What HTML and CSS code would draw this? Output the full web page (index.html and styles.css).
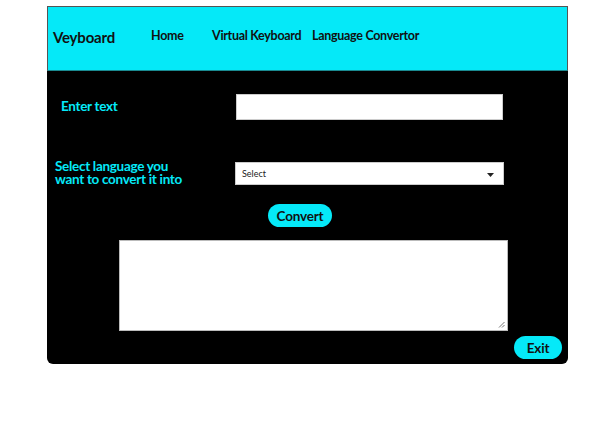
FILE: index.html
```html
<!DOCTYPE html>
<html>
<head>
<meta charset="utf-8">
<link rel="stylesheet" href="styles.css">
</head>
<body>
<div class="app">
  <header class="nav">
    <span class="brand">Veyboard</span>
    <a class="link home">Home</a>
    <a class="link vk">Virtual Keyboard</a>
    <a class="link">Language Convertor</a>
  </header>
  <main class="panel">
    <div class="row row-text">
      <label class="lbl lbl-text">Enter text</label>
      <input class="txt" type="text">
    </div>
    <div class="row row-lang">
      <label class="lbl lbl-lang">Select language you<br>want to convert it into</label>
      <div class="sel">
        <span>Select</span>
        <svg width="7" height="4" viewBox="0 0 7 4"><path d="M0 0H7L3.5 4Z" fill="#222"/></svg>
      </div>
    </div>
    <button class="pill convert">Convert</button>
    <div class="out">
      <svg class="grip" width="7" height="7" viewBox="0 0 7 7"><path d="M6.5 1L1 6.5M6.5 4L4 6.5" stroke="#777" stroke-width="1"/></svg>
    </div>
    <button class="pill exit">Exit</button>
  </main>
</div>
</body>
</html>
```
FILE: styles.css
```css
* { box-sizing: border-box; }
body { margin: 0; background: #fff; font-family: "Lato", "Open Sans", sans-serif; }
.app { width: 521px; margin: 6px 0 0 47px; }
.nav {
  height: 65px;
  background: #05e9f8;
  border: 1px solid #555;
  border-bottom: 1px solid #1a8a90;
  display: flex;
  align-items: center;
  padding: 0 0 6px 5px;
}
.brand { font-weight: 700; font-size: 15px; color: #111; margin-top: 2px; width: 98px; letter-spacing: -0.2px; }
.link { font-weight: 700; font-size: 12.5px; color: #111; letter-spacing: -0.3px; }
.home { width: 61px; }
.vk { width: 100px; }
.panel {
  background: #000;
  border-radius: 0 0 6px 6px;
  height: 293px;
  display: flex;
  flex-direction: column;
  padding-top: 23px;
}
.row { display: flex; align-items: center; }
.lbl { color: #05e9f8; font-weight: 700; font-size: 13.5px; letter-spacing: -0.3px; }
.lbl-text { width: 189px; padding-left: 14px; margin-top: -3px; }
.txt { width: 267px; height: 26px; border: 1px solid #ccc; background: #fff; margin: 0; }
.row-lang { margin-top: 40px; }
.lbl-lang { width: 188px; padding-left: 8px; line-height: 13px; }
.sel {
  width: 269px; height: 23px; background: #fff; border: 1px solid #ccc;
  display: flex; align-items: center; justify-content: space-between;
  padding: 0 9px 0 6px; font-size: 9px; color: #222;
}
.sel svg { margin-top: 3px; }
.pill {
  background: #05e9f8; border: none; border-radius: 12px;
  font-family: inherit; font-weight: 700; font-size: 13.5px; color: #111;
  height: 23px; padding: 0; letter-spacing: -0.2px;
}
.convert { width: 64px; margin: 18px 0 0 221px; }
.out {
  width: 389px; height: 91px; background: #fff; border: 1px solid #bbb;
  margin: 13px 0 0 72px; position: relative;
}
.grip { position: absolute; right: 2px; bottom: 2px; }
.exit { width: 48px; margin: 5px 0 0 467px; }
```
